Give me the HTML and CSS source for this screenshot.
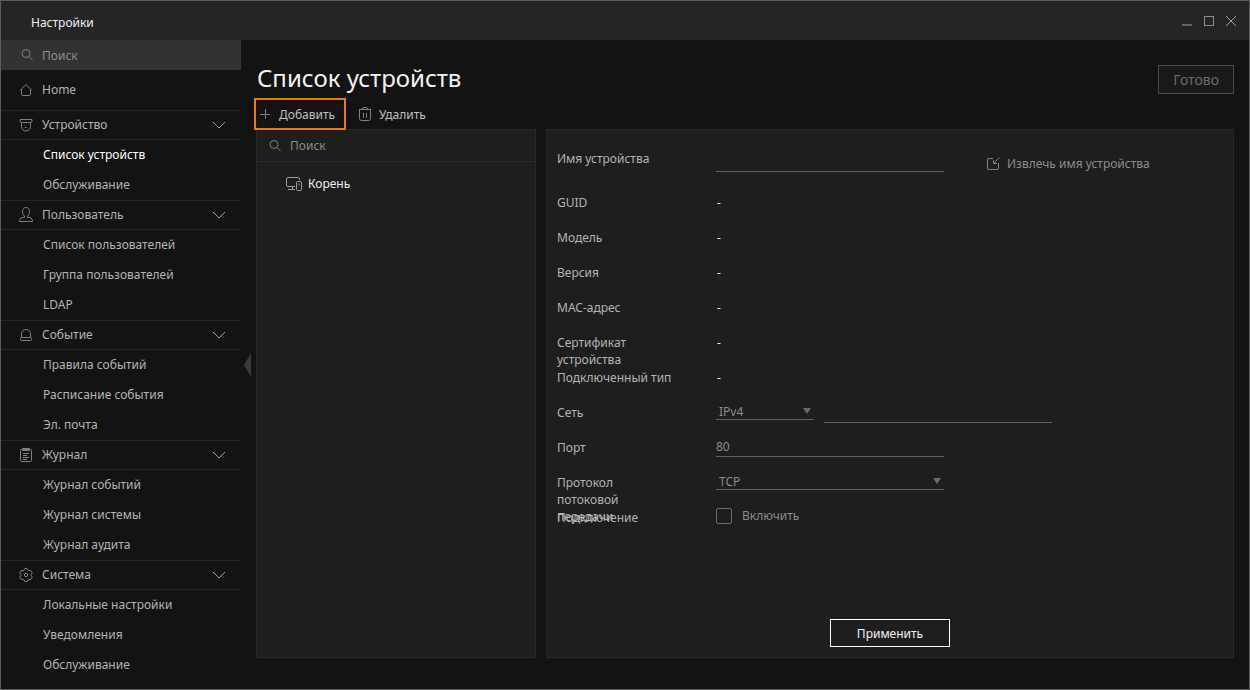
FILE: index.html
```html
<!DOCTYPE html>
<html lang="ru">
<head>
<meta charset="utf-8">
<title>Настройки</title>
<link rel="stylesheet" href="styles.css">
</head>
<body>
<div class="window">
  <header class="titlebar">
    <span class="titlebar-name">Настройки</span>
    <div class="window-controls">
      <button class="window-btn" aria-label="Свернуть"><svg width="10" height="12" viewBox="0 0 10 12"><path d="M0 9h10v2H0z" fill="#626262"/></svg></button>
      <button class="window-btn" aria-label="Развернуть"><svg width="10" height="12" viewBox="0 0 10 12"><rect x=".5" y="1.500" width="9" height="9" fill="none" stroke="#8c8c8c"/></svg></button>
      <button class="window-btn" aria-label="Закрыть"><svg width="10" height="12" viewBox="0 0 10 12"><path d="M0 1l10 10M10 1L0 11" fill="none" stroke="#a0a0a0"/></svg></button>
    </div>
  </header>
  <div class="body">
    <nav class="sidebar">
      <label class="side-search">
        <svg class="icon" viewBox="0 0 16 16"><circle cx="8" cy="6.500" r="4"/><path d="M11 9.500l3.500 3.500"/></svg>
        <input class="search-input" type="text" placeholder="Поиск" aria-label="Поиск">
      </label>
      <a class="home" href="#"><svg class="icon" viewBox="0 0 16 16"><path d="M2 8.500l6-6 6 6M3.500 7.500v5q0 1 1 1h7q1 0 1-1v-5"/></svg>Home</a>

      <button class="group"><svg class="icon" viewBox="0 0 16 16"><path d="M2 2.500h12v1.500q0 1.500-1.500 1.500h-9q-1.500 0-1.500-1.500zM3.500 5.500V9.500a4.500 4.500 0 0 0 9 0V5.500M7 10.500h1.500"/></svg>Устройство<svg class="chevron" viewBox="0 0 12 8"><path d="M0 1l6 6 6-6"/></svg></button>
      <a class="item item-active" href="#">Список устройств</a>
      <a class="item" href="#">Обслуживание</a>

      <button class="group"><svg class="icon" viewBox="0 0 16 16"><path d="M6.500 9C3.500 6.500 3.700.5 8 .5s4.500 6 1.500 8.500v1.200l3.500.8q1.500.7 1.500 3.500h-13q0-2.800 1.500-3.500l3.500-.8z"/></svg>Пользователь<svg class="chevron" viewBox="0 0 12 8"><path d="M0 1l6 6 6-6"/></svg></button>
      <a class="item" href="#">Список пользователей</a>
      <a class="item" href="#">Группа пользователей</a>
      <a class="item" href="#">LDAP</a>

      <button class="group"><svg class="icon" viewBox="0 0 16 16"><path d="M3.500 10.500V7a4.500 4.500 0 0 1 9 0v3.500"/><rect x="2.500" y="10.500" width="11" height="3" rx="1"/></svg>Событие<svg class="chevron" viewBox="0 0 12 8"><path d="M0 1l6 6 6-6"/></svg></button>
      <a class="item" href="#">Правила событий</a>
      <a class="item" href="#">Расписание события</a>
      <a class="item" href="#">Эл. почта</a>

      <button class="group"><svg class="icon" viewBox="0 0 16 16"><rect x="2.500" y="2.500" width="11" height="12" rx="1"/><path d="M4.500 1.500h7v2h-7zM5 6.500h6M5 8.500h4M5 10.500h6M5 12.500h4"/></svg>Журнал<svg class="chevron" viewBox="0 0 12 8"><path d="M0 1l6 6 6-6"/></svg></button>
      <a class="item" href="#">Журнал событий</a>
      <a class="item" href="#">Журнал системы</a>
      <a class="item" href="#">Журнал аудита</a>

      <button class="group"><svg class="icon" viewBox="0 0 16 16"><path d="M6.200 3L7 1.500h2L9.800 3l1.200.7 1.800-.2 1.500 2.300L13.200 7.300v1.400l1.100 1.500-1.500 2.300-1.800-.2-1.200.7L9 14.500H7L6.200 13l-1.200-.7-1.800.2-1.500-2.300 1.100-1.500V7.300L1.700 5.800l1.500-2.300 1.800.2z"/><circle cx="8" cy="8" r="1.700"/></svg>Система<svg class="chevron" viewBox="0 0 12 8"><path d="M0 1l6 6 6-6"/></svg></button>
      <a class="item" href="#">Локальные настройки</a>
      <a class="item" href="#">Уведомления</a>
      <a class="item" href="#">Обслуживание</a>
    </nav>

    <main class="main">
      <button class="collapse" aria-label="Скрыть меню"><svg width="7" height="24" viewBox="0 0 7 24"><path d="M7 0v24L0 12z" fill="#3a3a3a"/></svg></button>
      <div class="page-head">
        <h1 class="page-title">Список устройств</h1>
        <button class="done" disabled>Готово</button>
      </div>
      <div class="toolbar">
        <button class="tool tool-add"><svg class="plus" viewBox="0 0 10 10"><path d="M5.500 0v10M0 5.500h10"/></svg>Добавить</button>
        <button class="tool"><svg class="trash" viewBox="0 0 14 14"><path d="M1 2.500h12M4 2.500q0-2 2-2h2q2 0 2 2M1.500 3v8.500q0 2 2 2h7q2 0 2-2V3M5.500 6v5M8.500 6v5"/></svg>Удалить</button>
      </div>
      <div class="panels">
        <section class="panel tree">
          <label class="tree-search">
            <svg class="icon" viewBox="0 0 16 16"><circle cx="7" cy="6.500" r="4"/><path d="M10 9.500l3.500 3.500"/></svg>
            <input class="search-input" type="text" placeholder="Поиск" aria-label="Поиск устройства">
          </label>
          <a class="tree-root" href="#"><svg class="icon" viewBox="0 0 16 16"><path d="M13.500 4V3q0-1.500-1.500-1.500H2Q.5 1.500.5 3v6q0 1.500 1.500 1.500h7M6.500 10.500v3M2 13.500h7"/><rect x="10.500" y="5.500" width="5" height="9" rx="1"/><path d="M13 7.500v2"/></svg>Корень</a>
        </section>

        <form class="panel details">
          <div class="row row-name">
            <label class="label" for="name">Имя устройства</label>
            <input class="field" id="name" type="text">
            <button class="extract" type="button"><svg class="extract-icon" viewBox="0 0 13 13"><path d="M6 1.500H2q-1.500 0-1.500 1.500v8q0 1.500 1.500 1.500h8q1.500 0 1.500-1.500V6M12.500.5l-6 6M6.500 3v3.500H10"/></svg>Извлечь имя устройства</button>
          </div>
          <div class="row"><span class="label">GUID</span><output class="value">-</output></div>
          <div class="row"><span class="label">Модель</span><output class="value">-</output></div>
          <div class="row"><span class="label">Версия</span><output class="value">-</output></div>
          <div class="row"><span class="label">MAC-адрес</span><output class="value">-</output></div>
          <div class="row"><span class="label">Сертификат устройства</span><output class="value">-</output></div>
          <div class="row"><span class="label">Подключенный тип</span><output class="value">-</output></div>
          <div class="row">
            <label class="label" for="net">Сеть</label>
            <div class="net">
              <span class="pick"><select class="select" id="net"><option>IPv4</option></select></span>
              <input class="field" type="text" aria-label="Адрес">
            </div>
          </div>
          <div class="row">
            <label class="label" for="port">Порт</label>
            <input class="field" id="port" type="text" value="80">
          </div>
          <div class="row">
            <label class="label" for="proto">Протокол потоковой передачи</label>
            <span class="pick"><select class="select" id="proto"><option>TCP</option></select></span>
          </div>
          <div class="row">
            <span class="label">Подключение</span>
            <label class="check"><input class="box" type="checkbox">Включить</label>
          </div>
          <button class="apply" type="button">Применить</button>
        </form>
      </div>
    </main>
  </div>
</div>
</body>
</html>
```
FILE: styles.css
```css
* { box-sizing: border-box; }

body {
  margin: 0;
  background: #131313;
  color: #b4b4b4;
  font: 12px/17px "Noto Sans", sans-serif;
}

button, input, select {
  margin: 0;
  padding: 0;
  border: 0;
  border-radius: 0;
  background: none;
  color: inherit;
  font: inherit;
}

a { color: inherit; text-decoration: none; }

svg { display: block; flex: none; }

.icon, .chevron, .plus, .trash, .extract-icon { fill: none; stroke: #808080; }
.icon { width: 16px; height: 16px; }
.chevron { width: 12px; height: 8px; margin-left: auto; stroke: #a0a0a0; }
.plus { width: 10px; height: 10px; }
.trash { width: 14px; height: 14px; }
.extract-icon { width: 13px; height: 13px; }

.window {
  display: flex;
  flex-direction: column;
  min-height: 100vh;
  border: 1px solid #5c5c5c;
}

/* Title bar */
.titlebar {
  display: flex;
  justify-content: space-between;
  align-items: center;
  height: 39px;
  padding: 0 13px 0 30px;
  background: #252525;
}
.titlebar-name { padding-top: 4px; color: #f0f0f0; }
.window-controls { display: flex; gap: 12px; }

.body { display: flex; flex: 1; }

/* Sidebar */
.sidebar { flex: none; width: 240px; }
.side-search {
  display: flex;
  align-items: center;
  gap: 8px;
  height: 30px;
  padding-left: 17px;
  background: #323232;
}
.search-input { flex: 1; min-width: 0; outline: 0; }
.search-input::placeholder { color: #8c8c8c; opacity: 1; }
.home, .group {
  display: flex;
  align-items: center;
  gap: 8px;
  width: 100%;
  padding: 0 16px 0 17px;
  line-height: 16px;
}
.home { height: 40px; padding-bottom: 1px; }
.group {
  height: 30px;
  border-top: 1px solid #262626;
  border-bottom: 1px solid #262626;
  text-align: left;
}
.item {
  display: flex;
  align-items: center;
  height: 30px;
  padding-left: 42px;
  line-height: 16px;
}
.item-active { color: #fff; }

/* Main area */
.main {
  position: relative;
  display: flex;
  flex: 1;
  flex-direction: column;
  min-width: 0;
  padding: 25px 15px 31px;
}
.collapse {
  position: absolute;
  left: 3px;
  top: 50%;
  transform: translateY(-50%);
}
.page-head {
  display: flex;
  justify-content: space-between;
  align-items: flex-start;
}
.page-title {
  margin: 0;
  padding-left: 1px;
  color: #f4f4f4;
  font-size: 24px;
  font-weight: 400;
  line-height: 26px;
}
.done {
  height: 29px;
  padding: 0 14px;
  border: 1px solid #4c4c4c;
  background: #191919;
  color: #6c6c6c;
  font-size: 14px;
}
.toolbar {
  position: relative;
  display: flex;
  gap: 12px;
  margin: 4px 0 -1px -2px;
}
.tool {
  display: flex;
  align-items: center;
  gap: 7px;
  height: 32px;
  color: #c0c0c0;
}
.tool-add { padding: 0 9px 0 4px; gap: 9px; border: 2px solid #e87c0c; }

.panels { display: flex; flex: 1; gap: 10px; }
.panel { border: 1px solid #292929; background: #1e1e1e; }

.tree { flex: none; width: 280px; }
.tree-search {
  display: flex;
  align-items: center;
  gap: 7px;
  height: 32px;
  padding-left: 10px;
  border-bottom: 1px solid #292929;
}
.tree-root {
  display: flex;
  align-items: center;
  gap: 6px;
  height: 43px;
  padding-left: 29px;
  color: #f0f0f0;
}
.tree-root .icon { stroke: #9c9c9c; }

/* Device form */
.details {
  display: flex;
  flex: 1;
  flex-direction: column;
  padding: 11px 10px 10px;
}
.row {
  display: grid;
  grid-template-columns: 159px 228px auto;
  justify-content: start;
  align-items: start;
  height: 35px;
}
.row-name { height: 44px; }
.label { width: 118px; padding-top: 9px; }
.value { padding: 9px 0 0 1px; color: #f0f0f0; }
.field {
  width: 228px;
  height: 27px;
  padding-top: 6px;
  border-bottom: 1px solid #5e5e5e;
  color: #8c8c8c;
  outline: 0;
}
.row-name .field { height: 31px; }
.extract {
  display: flex;
  align-items: center;
  gap: 7px;
  margin: 14px 0 0 43px;
  color: #8c8c8c;
  white-space: nowrap;
}
.net { display: grid; grid-template-columns: 98px 228px; gap: 10px; }
.net .field { height: 28px; }
.pick { position: relative; display: block; padding-top: 8px; }
.pick::after {
  content: "";
  position: absolute;
  right: 3px;
  top: 13px;
  border: solid transparent;
  border-width: 6px 4px 0;
  border-top-color: #6a6a6a;
  pointer-events: none;
}
.select {
  display: block;
  width: 100%;
  height: 17px;
  padding-left: 3px;
  border-bottom: 1px solid #5e5e5e;
  color: #8c8c8c;
  appearance: none;
}
.check {
  display: flex;
  align-items: center;
  gap: 10px;
  padding-top: 7px;
  color: #8c8c8c;
}
.box {
  width: 16px;
  height: 16px;
  border: 1px solid #6a6a6a;
  border-radius: 2px;
  appearance: none;
}
.apply {
  align-self: center;
  width: 120px;
  height: 28px;
  margin-top: auto;
  border: 1px solid #fff;
  color: #f4f4f4;
}
```
